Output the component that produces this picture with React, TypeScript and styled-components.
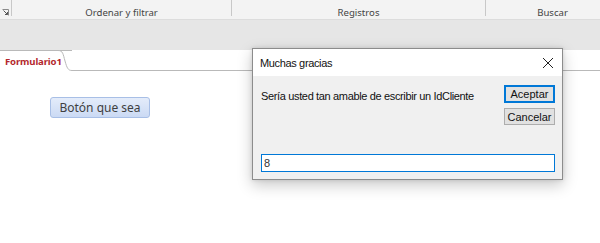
import styled, { createGlobalStyle } from 'styled-components';

const GlobalStyle = createGlobalStyle`
  html, body {
    margin: 0;
    padding: 0;
    background: #ffffff;
    overflow: hidden;
  }
  * {
    box-sizing: border-box;
  }
`;

const ribbonGroups = [
  { label: 'Ordenar y filtrar', width: 220 },
  { label: 'Registros', width: 254 },
  { label: 'Buscar', width: 134 },
];

function App() {
  return (
    <Page>
      <GlobalStyle />
      <Ribbon>
        <Launcher>
          <svg width="7" height="7" viewBox="0 0 7 7">
            <path d="M0.5 0.5h6v6" fill="none" stroke="#8a8a8a" />
            <path d="M1.5 1.5l4 4M3 5.5h2.5V3" fill="none" stroke="#555" />
          </svg>
        </Launcher>
        {ribbonGroups.map((g) => (
          <RibbonGroup key={g.label} $width={g.width}>
            {g.label}
          </RibbonGroup>
        ))}
      </Ribbon>
      <Band />
      <TabStrip>
        <Tab>
          Formulario1
          <TabCurve width="14" height="21" viewBox="0 0 14 21">
            <path d="M0 0.5 C5 0.5 5 4 7 11 C9 18 10 20.5 14 20.5" fill="#fff" stroke="#b9b9b9" />
          </TabCurve>
        </Tab>
        <TabLine />
      </TabStrip>
      <Canvas>
        <FormButton>Botón que sea</FormButton>
      </Canvas>

      <Dialog>
        <TitleBar>
          <Title>Muchas gracias</Title>
          <CloseIcon width="12" height="12" viewBox="0 0 12 12">
            <path d="M1 1l10 10M11 1L1 11" stroke="#222" strokeWidth="1" />
          </CloseIcon>
        </TitleBar>
        <DialogBody>
          <Message>Sería usted tan amable de escribir un IdCliente</Message>
          <ButtonColumn>
            <DialogButton $primary>Aceptar</DialogButton>
            <DialogButton>Cancelar</DialogButton>
          </ButtonColumn>
          <Input defaultValue="8" />
        </DialogBody>
      </Dialog>
    </Page>
  );
}

const Page = styled.div`
  position: relative;
  width: 600px;
  height: 243px;
  display: flex;
  flex-direction: column;
  background: #fff;
`;

const Ribbon = styled.div`
  display: flex;
  height: 20px;
  background: #f3f3f3;
  border-bottom: 1px solid #dcdcdc;
  overflow: hidden;
  flex-shrink: 0;
`;

const Launcher = styled.div`
  width: 11px;
  display: flex;
  align-items: flex-end;
  justify-content: center;
  padding-bottom: 3px;
  flex-shrink: 0;
`;

const RibbonGroup = styled.div<{ $width: number }>`
  width: ${(p) => p.$width}px;
  flex-shrink: 0;
  display: flex;
  justify-content: center;
  align-items: center;
  padding-top: 5px;
  font-family: 'Noto Sans', 'Open Sans', sans-serif;
  font-size: 9.6px;
  color: #444;
  border-left: 1px solid #c8c8c8;
  border-image: linear-gradient(to bottom, #c8c8c8 0, #c8c8c8 15px, transparent 15px) 1;
`;

const Band = styled.div`
  height: 30px;
  background: #e6e6e6;
  flex-shrink: 0;
`;

const TabStrip = styled.div`
  display: flex;
  align-items: flex-end;
  height: 21px;
  background: #fff;
  flex-shrink: 0;
`;

const Tab = styled.div`
  position: relative;
  height: 21px;
  width: 72px;
  padding: 4px 0 0 5px;
  border-top: 1px solid #b9b9b9;
  font-family: 'Noto Sans', 'Open Sans', sans-serif;
  font-size: 9.6px;
  font-weight: 700;
  letter-spacing: -0.15px;
  color: #b3282d;
  flex-shrink: 0;
`;

const TabCurve = styled.svg`
  position: absolute;
  right: 0;
  top: -1px;
`;

const TabLine = styled.div`
  flex: 1;
  height: 1px;
  background: #b9b9b9;
`;

const Canvas = styled.div`
  flex: 1;
  padding: 26px 0 0 50px;
`;

const FormButton = styled.button`
  width: 100px;
  height: 21px;
  border: 1px solid #a8bfe6;
  border-radius: 3px;
  background: linear-gradient(to bottom, #e4ecfa, #cbdaf4);
  font-family: 'Noto Sans', 'Open Sans', sans-serif;
  font-size: 12px;
  color: #3f3f3f;
  padding: 0;
`;

const Dialog = styled.div`
  position: absolute;
  left: 252px;
  top: 48px;
  width: 311px;
  height: 132px;
  border: 1px solid #8c8c8c;
  background: #f0f0f0;
  box-shadow: 0 5px 14px rgba(0, 0, 0, 0.22), 0 0 4px rgba(0, 0, 0, 0.12);
  display: flex;
  flex-direction: column;
`;

const TitleBar = styled.div`
  height: 27px;
  background: #fff;
  display: flex;
  align-items: center;
  justify-content: space-between;
  padding: 0 8px 0 7px;
  flex-shrink: 0;
`;

const Title = styled.div`
  font-family: 'Liberation Sans', Arial, sans-serif;
  font-size: 11px;
  letter-spacing: -0.35px;
  color: #111;
`;

const CloseIcon = styled.svg`
  display: block;
`;

const DialogBody = styled.div`
  flex: 1;
  display: grid;
  grid-template-columns: 1fr 51px;
  grid-template-rows: 1fr auto;
  column-gap: 8px;
  padding: 9px 7px 7px 8px;
`;

const Message = styled.div`
  font-family: 'Liberation Sans', Arial, sans-serif;
  font-size: 11px;
  letter-spacing: -0.35px;
  color: #111;
  padding-top: 5px;
`;

const ButtonColumn = styled.div`
  display: flex;
  flex-direction: column;
  gap: 5px;
`;

const DialogButton = styled.button<{ $primary?: boolean }>`
  width: 51px;
  height: ${(p) => (p.$primary ? 18 : 17)}px;
  padding: 0;
  background: #e1e1e1;
  border: ${(p) => (p.$primary ? '2px solid #0078d7' : '1px solid #adadad')};
  font-family: 'Liberation Sans', Arial, sans-serif;
  font-size: 11px;
  color: #111;
`;

const Input = styled.input`
  grid-column: 1 / span 2;
  height: 18px;
  border: 1px solid #0078d7;
  background: #fff;
  padding: 0 2px;
  font-family: 'Liberation Sans', Arial, sans-serif;
  font-size: 11px;
  color: #333;
  outline: none;
`;

export default App;
